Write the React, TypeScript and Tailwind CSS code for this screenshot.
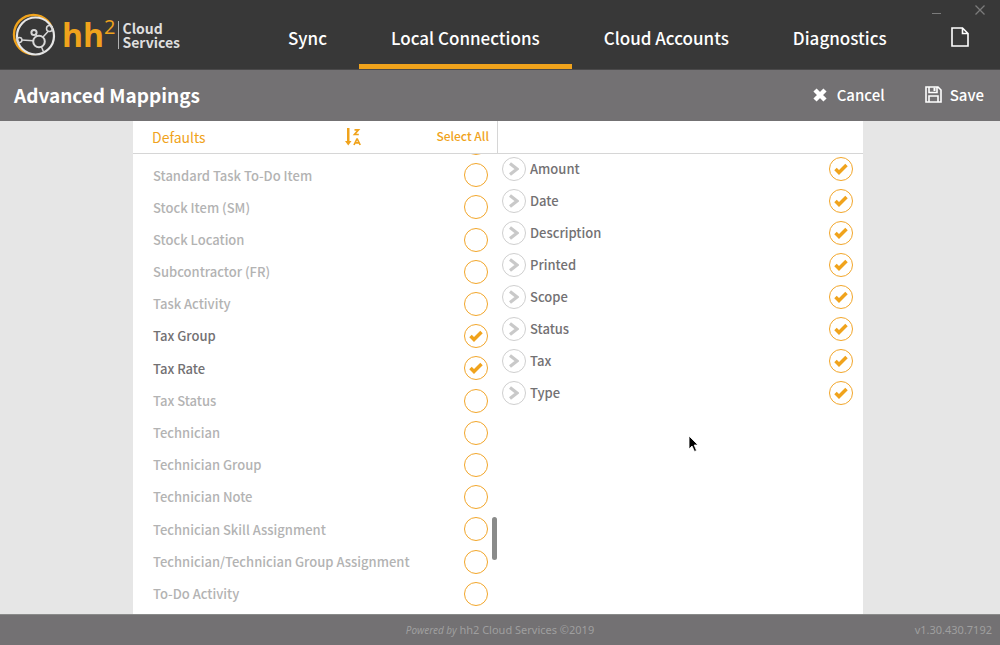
import { useState } from 'react';

const tabs = ['Sync', 'Local Connections', 'Cloud Accounts', 'Diagnostics'];

const defaults = [
  'Standard Task To-Do Item',
  'Stock Item (SM)',
  'Stock Location',
  'Subcontractor (FR)',
  'Task Activity',
  'Tax Group',
  'Tax Rate',
  'Tax Status',
  'Technician',
  'Technician Group',
  'Technician Note',
  'Technician Skill Assignment',
  'Technician/Technician Group Assignment',
  'To-Do Activity',
];

const fields = ['Amount', 'Date', 'Description', 'Printed', 'Scope', 'Status', 'Tax', 'Type'];

function Logo() {
  return (
    <svg viewBox="0 0 44 44" className="h-11 w-11 flex-shrink-0" fill="none" aria-hidden="true">
      <circle cx="21.5" cy="21.5" r="19.5" stroke="#f0a31c" strokeWidth="2.4" />
      <circle cx="23.5" cy="23" r="18.5" fill="#383838" stroke="#e6e6e6" strokeWidth="2.2" />
      <g stroke="#d8d8d8" strokeWidth="1.5">
        <path d="M9.5 27l12 .8M31 24l5.5-6M29.5 34l2.5 6M25 23l-1.5-2.5" />
        <circle cx="27" cy="28.5" r="5.8" strokeWidth="2" />
        <circle cx="22" cy="19.5" r="2.6" strokeWidth="2" />
        <circle cx="37.5" cy="15.5" r="3" />
        <circle cx="7.5" cy="27" r="2.4" />
      </g>
    </svg>
  );
}

function SortIcon() {
  return (
    <svg viewBox="0 0 16 18" className="h-[18px] w-4" aria-hidden="true">
      <path d="M2 0h2.5v13H6.5L3.25 17.5 0 13h2z" fill="#f0a31c" />
      <path d="M9.5 1.8h4l-4 4.7h4.3M9 17l2.9-6h.4l2.9 6M10.2 14.8h3.7" fill="none" stroke="#f0a31c" strokeWidth="1.7" />
    </svg>
  );
}

type RoundCheckProps = { id?: string; label?: string; checked: boolean; onChange: () => void };

function RoundCheck({ id, label, checked, onChange }: RoundCheckProps) {
  return (
    <span className="grid h-6 w-6 flex-shrink-0 place-items-center">
      <input
        id={id}
        aria-label={label}
        type="checkbox"
        checked={checked}
        onChange={onChange}
        className="col-start-1 row-start-1 h-6 w-6 cursor-pointer appearance-none rounded-full border border-[#f2a62a] bg-white"
      />
      {checked && (
        <svg viewBox="0 0 14 12" className="pointer-events-none z-10 col-start-1 row-start-1 h-3 w-3.5" aria-hidden="true">
          <path d="M1.5 6L5 9.5 12.5 2" fill="none" stroke="#f0a31c" strokeWidth="3.5" />
        </svg>
      )}
    </span>
  );
}

export default function App() {
  const [tab, setTab] = useState('Local Connections');
  const [selected, setSelected] = useState(['Tax Group', 'Tax Rate']);
  const [mapped, setMapped] = useState(fields);

  const toggle = (list: string[], name: string) =>
    list.includes(name) ? list.filter((n) => n !== name) : [...list, name];

  // rows scrolled almost out of view at either end of the list
  const edgeRow = (name: string) => (
    <li className="flex min-h-8 flex-1 items-center justify-end">
      <RoundCheck label={name} checked={selected.includes(name)} onChange={() => setSelected(toggle(selected, name))} />
    </li>
  );

  return (
    <div className="flex h-screen flex-col overflow-hidden bg-[#e6e6e6] font-['Noto_Sans_CJK_SC',sans-serif]">
      <header className="relative flex h-[70px] flex-shrink-0 border-b border-[#4a494a] bg-[#383838] text-white">
        <div className="flex w-64 flex-shrink-0 items-center pl-3">
          <Logo />
          <span className="ml-1.5 font-['Open_Sans',sans-serif] text-[32px] leading-9 font-bold text-[#f0a31c]">hh</span>
          <span className="mb-4 font-['Open_Sans',sans-serif] text-xl leading-5 text-[#f0a31c]">2</span>
          <span className="ml-0.5 border-l border-[#b0b0b0] pl-1 text-sm leading-[14px] font-bold text-[#dedede]">
            <span className="block">Cloud</span>
            <span className="block">Services</span>
          </span>
        </div>
        <nav className="flex">
          {tabs.map((name) => (
            <button
              key={name}
              onClick={() => setTab(name)}
              className={`cursor-pointer border-b-5 px-8 pt-3 text-[17px] font-medium whitespace-nowrap ${tab === name ? 'border-[#f0a31c]' : 'border-transparent'}`}
            >
              {name}
            </button>
          ))}
        </nav>
        <div className="flex flex-1 items-center justify-end pt-1 pr-[31px]">
          <button aria-label="Document" className="cursor-pointer">
            <svg viewBox="0 0 18 20" className="h-5 w-[18px]" fill="none" stroke="#fff" strokeWidth="1.6" aria-hidden="true">
              <path d="M1 1h10.5L17 6.5V19H1zM11.5 1v5.5H17" />
            </svg>
          </button>
        </div>
        <div className="absolute top-1 right-3.5 flex items-center gap-[30px] text-[#7b7b7b]">
          <button aria-label="Minimize" className="flex h-3 w-3 cursor-pointer items-end pb-0.5">
            <span className="h-px w-[9px] bg-current" />
          </button>
          <button aria-label="Close" className="h-3 w-3 cursor-pointer">
            <svg viewBox="0 0 12 12" stroke="currentColor" strokeWidth="1.3" aria-hidden="true">
              <path d="M1.5 1.5l9 9M10.5 1.5l-9 9" />
            </svg>
          </button>
        </div>
      </header>

      <div className="flex h-[51px] flex-shrink-0 items-center justify-between bg-[#737173] pr-4 pb-0.5 pl-3.5 text-white">
        <h1 className="text-[19px] leading-6 font-bold">Advanced Mappings</h1>
        <div className="flex items-center gap-10 text-[15px] leading-6 font-medium">
          <button className="flex cursor-pointer items-center gap-2.5">
            <svg viewBox="0 0 14 14" className="h-3.5 w-3.5" stroke="#fff" strokeWidth="4.5" aria-hidden="true">
              <path d="M2 2l10 10M12 2L2 12" />
            </svg>
            Cancel
          </button>
          <button className="flex cursor-pointer items-center gap-2">
            <svg viewBox="0 0 17 17" className="h-[17px] w-[17px]" fill="none" stroke="#fff" strokeWidth="1.6" aria-hidden="true">
              <path d="M1 1h12l3 3v12H1zM4 1v5.5h8V1M4 16v-6h9v6" />
              <path d="M8.5 1.5h2V5h-2z" fill="#fff" stroke="none" />
            </svg>
            Save
          </button>
        </div>
      </div>

      <main className="ml-[13.3%] flex min-h-0 w-[73%] flex-1 flex-col bg-white">
        <div className="grid h-[33px] flex-shrink-0 grid-cols-2 border-b border-[#d6d6d6]">
          <div className="flex items-center border-r border-[#d6d6d6] pr-2 pl-[19px] text-[#f0a31c]">
            <h2 className="flex-3 text-sm">Defaults</h2>
            <button aria-label="Sort" className="cursor-pointer">
              <SortIcon />
            </button>
            <div className="flex flex-2 justify-end pb-0.5">
              <button onClick={() => setSelected(defaults)} className="cursor-pointer text-xs leading-4 font-medium">
                Select All
              </button>
            </div>
          </div>
        </div>

        <div className="grid min-h-0 flex-1 grid-cols-2 text-[13px] font-medium">
          <section className="relative flex min-h-0 flex-col overflow-hidden">
            <ul className="-mt-[27px] -mb-7 flex flex-1 flex-col pr-2.5 pl-5">
              {edgeRow('Standard Task')}
              {defaults.map((name, i) => {
                const on = selected.includes(name);
                return (
                  <li key={name} className="flex min-h-8 flex-1 items-center justify-between">
                    <label htmlFor={`default-${i}`} className={on ? 'text-[#737173]' : 'text-[#b3b3b3]'}>
                      {name}
                    </label>
                    <RoundCheck id={`default-${i}`} checked={on} onChange={() => setSelected(toggle(selected, name))} />
                  </li>
                );
              })}
              {edgeRow('To-Do Item')}
            </ul>
            <div className="absolute top-[79%] right-px h-[43px] w-[5px] rounded-full bg-[#8a8b8a]" />
          </section>

          <section className="relative overflow-hidden">
            <ul className="-mt-px pr-2.5 pl-1">
              {fields.map((name, i) => (
                <li key={name} className="flex h-8 items-center">
                  <button
                    aria-label={`Expand ${name}`}
                    className="mr-1 grid h-6 w-6 cursor-pointer place-items-center rounded-full border border-[#cfcfcf]"
                  >
                    <svg viewBox="0 0 10 14" className="h-3.5 w-2.5" fill="none" stroke="#c9c9c9" strokeWidth="3.2" aria-hidden="true">
                      <path d="M1 1.5L8 7l-7 5.5" />
                    </svg>
                  </button>
                  <label htmlFor={`field-${i}`} className="flex-1 text-[#737173]">
                    {name}
                  </label>
                  <RoundCheck
                    id={`field-${i}`}
                    checked={mapped.includes(name)}
                    onChange={() => setMapped(toggle(mapped, name))}
                  />
                </li>
              ))}
            </ul>
            {/* pointer */}
            <svg viewBox="0 0 12 18" className="absolute top-[61%] left-[52%] h-[18px] w-3" aria-hidden="true">
              <path d="M1 1v13l3-3 2.5 5.5 2-1L6.2 10H10z" fill="#000" stroke="#fff" strokeWidth="0.8" />
            </svg>
          </section>
        </div>
      </main>

      <footer className="grid h-[31px] flex-shrink-0 grid-cols-[1fr_auto_1fr] items-center border-t border-[#8a8b8a] bg-[#737173] px-2 font-['Noto_Sans',sans-serif] text-[11px] text-[#9f9f9f]">
        <p className="col-start-2">
          <em className="text-[10px]">Powered by</em> hh2 Cloud Services ©2019
        </p>
        <p className="text-right">v1.30.430.7192</p>
      </footer>
    </div>
  );
}
